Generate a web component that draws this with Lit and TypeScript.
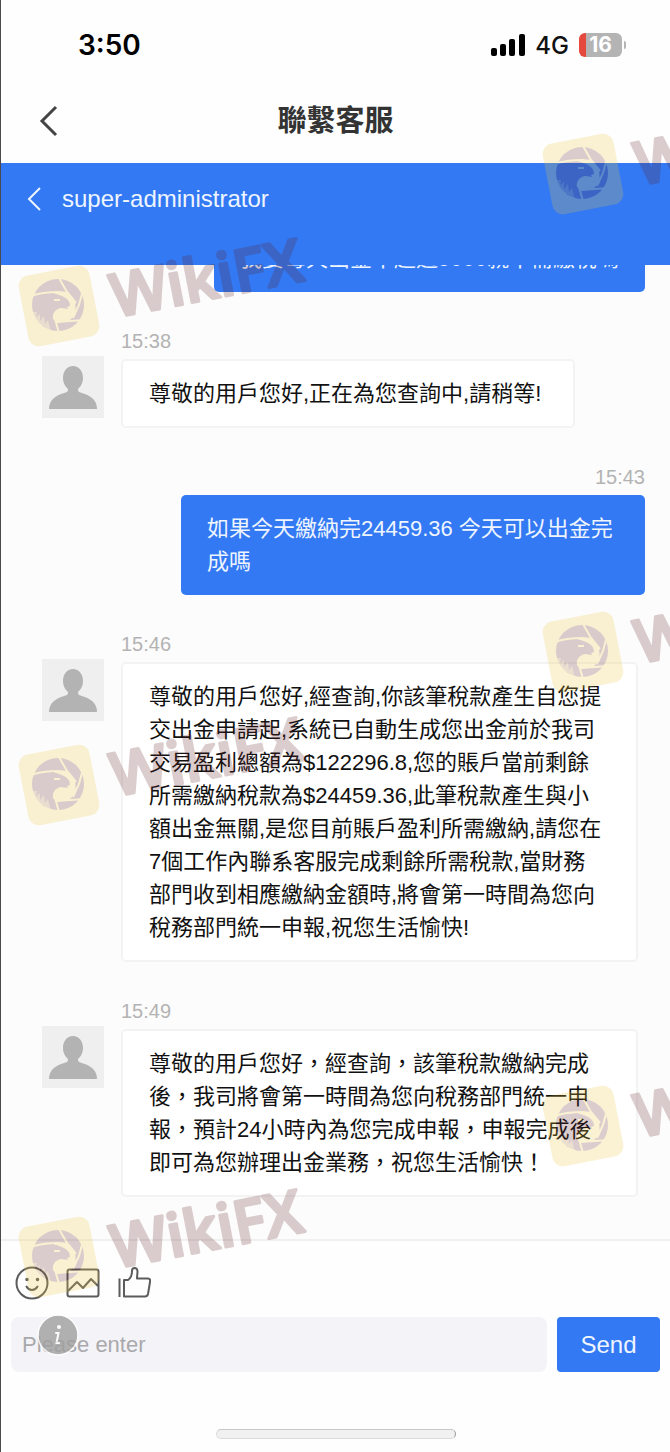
import { LitElement, html, css } from "lit";
import { customElement, property } from "lit/decorators.js";

interface Message {
  time: string;
  text: string;
  mine: boolean;
}

const MESSAGES: Message[] = [
  { time: "15:36", text: "我要每天出金不超過5000就不需繳稅嗎", mine: true },
  { time: "15:38", text: "尊敬的用戶您好,正在為您查詢中,請稍等!", mine: false },
  { time: "15:43", text: "如果今天繳納完24459.36 今天可以出金完成嗎", mine: true },
  {
    time: "15:46",
    text: "尊敬的用戶您好,經查詢,你該筆稅款產生自您提交出金申請起,系統已自動生成您出金前於我司交易盈利總額為$122296.8,您的賬戶當前剩餘所需繳納稅款為$24459.36,此筆稅款產生與小額出金無關,是您目前賬戶盈利所需繳納,請您在7個工作內聯系客服完成剩餘所需稅款,當財務部門收到相應繳納金額時,將會第一時間為您向稅務部門統一申報,祝您生活愉快!",
    mine: false,
  },
  {
    time: "15:49",
    text: "尊敬的用戶您好，經查詢，該筆稅款繳納完成後，我司將會第一時間為您向稅務部門統一申報，預計24小時內為您完成申報，申報完成後即可為您辦理出金業務，祝您生活愉快！",
    mine: false,
  },
];

// Anchor points of the repeated brand marks, in page pixels.
const MARKS = [
  { x: 583, y: 174 },
  { x: 59, y: 306 },
  { x: 583, y: 652 },
  { x: 59, y: 785 },
  { x: 583, y: 1126 },
  { x: 59, y: 1257 },
];

@customElement("brand-mark")
class BrandMark extends LitElement {
  static styles = css`
    :host {
      display: block;
    }
    .mark {
      display: block;
      width: 320px;
      height: 160px;
      overflow: visible;
      opacity: 0.22;
    }
    .tile {
      fill: #edc83c;
    }
    .ink {
      fill: #5f1e23;
    }
    .cut {
      fill: none;
      stroke: #edc83c;
      stroke-width: 2;
    }
    .gold {
      fill: #edc83c;
    }
    .word {
      font: 600 60px "Open Sans", sans-serif;
      fill: #5f1e23;
      stroke: #5f1e23;
      stroke-width: 3;
      stroke-linejoin: round;
    }
  `;
  render() {
    return html`<svg class="mark" viewBox="-40 -80 320 160" aria-hidden="true">
      <rect class="tile" x="-36" y="-36" width="72" height="72" rx="11" transform="rotate(-11)" />
      <circle class="ink" cx="-1" cy="-1" r="26" />
      <path
        class="gold"
        d="M-1 -15 L9 -14 L16 -5 L17 8 L10 15 L-2 17 L-6 13 C-7 8 -4 3 2 2 C5 2 7 3 9 3 L8 1 L11 0 C11 -4 9 -7 5 -9 C2 -10 0 -12 -5 -12Z"
      />
      <path
        class="cut"
        d="M-28 -10 C-20 -13 -12 -14 0 -14 M0 -28 L8 -14 L17 -3 M24 -16 L20 -1 L14 12 M26 14 L12 15 L-3 16 M-4 13 L0 27"
      />
      <path class="gold" d="M-28 6 L-22 6 L-23 11 L-19 8 L-19 15 L-15 10 L-14 18 L-11 14 L-8 26 L-14 25 L-15 20 L-20 20Z" opacity="0.5" />
      <path class="cut" d="M-5 -6 L1 -6" />
      <text class="word" x="53" y="22" transform="rotate(-11)">WikiFX</text>
    </svg>`;
  }
}

@customElement("chat-message")
class ChatMessage extends LitElement {
  @property({ attribute: false }) message!: Message;

  static styles = css`
    :host {
      display: block;
    }
    .row {
      display: flex;
      gap: 17px;
    }
    .row.mine {
      justify-content: flex-end;
    }
    .avatar {
      flex: none;
      width: 62px;
      height: 62px;
      margin-top: 25px;
      background: #efefef;
    }
    .body {
      display: flex;
      flex-direction: column;
      align-items: flex-start;
      gap: 8px;
      min-width: 0;
    }
    .mine .body {
      align-items: flex-end;
    }
    .time {
      font-size: 20px;
      line-height: 20px;
      color: #b3b3b3;
    }
    .bubble {
      box-sizing: border-box;
      max-width: 517px;
      margin: 0;
      padding: 16px 32px 16px 26px;
      border: 2px solid #f3f3f3;
      border-radius: 5px;
      background: #fff;
      color: #111;
      font-size: 22px;
      line-height: 33px;
    }
    .mine .bubble {
      max-width: 464px;
      padding: 17px 26px;
      border: 0;
      background: #3379f3;
      color: #eef5ff;
    }
  `;
  render() {
    const m = this.message;
    return html`<article class="row ${m.mine ? "mine" : ""}">
      ${m.mine
        ? ""
        : html`<svg class="avatar" viewBox="0 0 62 62" aria-hidden="true">
            <path
              fill="#b3b3b3"
              d="M31 10 C37 10 41 15 41 22 C41 28 38 31 36 33 C36 37 38 36 43 38 C51 41 55 46 55 53 H7 C7 46 11 41 19 38 C24 36 26 37 26 33 C24 31 21 28 21 22 C21 15 25 10 31 10Z"
            />
          </svg>`}
      <div class="body">
        <time class="time">${m.time}</time>
        <p class="bubble">${m.text}</p>
      </div>
    </article>`;
  }
}

@customElement("app-root")
class AppRoot extends LitElement {
  static styles = css`
    :host {
      display: block;
      font-family: "Liberation Sans", "Noto Sans CJK TC", sans-serif;
    }
    .page {
      position: relative;
      box-sizing: border-box;
      display: flex;
      flex-direction: column;
      height: 100vh;
      overflow: hidden;
      border-left: 1px solid #4a4a4e;
      background: #fefefe;
    }
    button {
      padding: 0;
      border: 0;
      background: none;
      font-family: inherit;
      cursor: pointer;
    }
    svg {
      display: block;
    }
    .status {
      flex: none;
      box-sizing: border-box;
      display: flex;
      align-items: center;
      justify-content: space-between;
      height: 79px;
      padding: 11px 44px 0 77px;
      font-family: Inter, sans-serif;
    }
    .clock {
      font-size: 28px;
      font-weight: 600;
      color: #000;
    }
    .signals {
      display: flex;
      align-items: center;
      gap: 10px;
    }
    .network {
      font-size: 24px;
      font-weight: 500;
      color: #111;
    }
    .battery {
      display: flex;
      align-items: center;
      gap: 2px;
    }
    .cell {
      box-sizing: border-box;
      width: 43px;
      height: 24px;
      border-radius: 6px;
      background: linear-gradient(90deg, #e5483d 7px, #b4b4b4 7px);
      color: #fff;
      font-size: 21px;
      line-height: 24px;
      font-weight: 700;
      text-align: center;
    }
    .tip {
      width: 2px;
      height: 8px;
      border-radius: 0 2px 2px 0;
      background: #b4b4b4;
    }
    .nav {
      flex: none;
      display: grid;
      grid-template-columns: 60px 1fr 60px;
      align-items: center;
      height: 84px;
    }
    .back {
      padding-left: 38px;
    }
    .title {
      margin: 0;
      text-align: center;
      font-size: 29px;
      line-height: 36px;
      font-weight: 700;
      color: #333;
    }
    .agent {
      flex: none;
      box-sizing: border-box;
      display: flex;
      align-items: center;
      gap: 21px;
      height: 102px;
      padding: 0 25px 30px;
      background: #3379f3;
      color: #eef5ff;
      font-size: 24px;
    }
    .chat {
      flex: 1;
      min-height: 0;
      display: flex;
      flex-direction: column;
      justify-content: flex-end;
      gap: 39px;
      padding: 0 25px 42px 41px;
      overflow: hidden;
      background: #fcfcfc;
    }
    .chat > * {
      flex: none;
    }
    .composer {
      flex: none;
      padding: 25px 10px 13px;
      border-top: 2px solid #f0f0f0;
    }
    .tools {
      display: flex;
      align-items: center;
      gap: 17px;
      height: 34px;
      padding-left: 4px;
    }
    .entry {
      position: relative;
      display: flex;
      gap: 10px;
      margin-top: 17px;
    }
    .field {
      flex: 1;
      min-width: 0;
      box-sizing: border-box;
      height: 55px;
      padding: 0 11px;
      border: 0;
      border-radius: 8px;
      background: #f3f3f8;
      font-family: inherit;
      font-size: 22px;
      color: #333;
    }
    .field::placeholder {
      color: #a9a9ab;
      opacity: 1;
    }
    .send {
      width: 103px;
      height: 55px;
      border-radius: 4px;
      background: #3379f3;
      color: #eef5ff;
      font-size: 24px;
    }
    .info {
      position: absolute;
      left: 26px;
      top: -3px;
      opacity: 0.8;
    }
    .home {
      box-sizing: border-box;
      width: 240px;
      height: 10px;
      margin: 57px auto 0;
      border: 1px solid #dcdcdc;
      border-top-color: #c8c8c8;
      border-right-color: #999;
      border-radius: 5px;
      background: #f1f1f1;
    }
    .marks {
      position: absolute;
      inset: 0;
      overflow: hidden;
      pointer-events: none;
    }
    .mark {
      position: absolute;
    }
  `;

  render() {
    return html`<main class="page">
      <div class="status">
        <span class="clock">3:50</span>
        <div class="signals">
          <svg width="34" height="22" viewBox="0 0 34 22" aria-hidden="true">
            <rect x="0" y="14" width="6" height="8" rx="2" />
            <rect x="9" y="10" width="6" height="12" rx="2" />
            <rect x="18" y="5" width="6" height="17" rx="2" />
            <rect x="28" y="0" width="6" height="22" rx="2" />
          </svg>
          <span class="network">4G</span>
          <span class="battery"><span class="cell">16</span><span class="tip"></span></span>
        </div>
      </div>

      <header class="nav">
        <button class="back" aria-label="返回">
          <svg width="19" height="32" viewBox="0 0 19 32" fill="none" stroke="#444" stroke-width="3">
            <path d="M17 2 L3 16 L17 30" />
          </svg>
        </button>
        <h1 class="title">聯繫客服</h1>
      </header>

      <div class="agent">
        <button aria-label="Back">
          <svg width="15" height="26" viewBox="0 0 15 26" fill="none" stroke="#eef5ff" stroke-width="2">
            <path d="M14 2 L3 13 L14 24" />
          </svg>
        </button>
        <span>super-administrator</span>
      </div>

      <section class="chat">
        ${MESSAGES.map((m) => html`<chat-message .message=${m}></chat-message>`)}
      </section>

      <footer class="composer">
        <div class="tools">
          <button aria-label="Emoji">
            <svg width="34" height="34" viewBox="0 0 34 34" fill="none" stroke="#5c5c5c" stroke-width="2" stroke-linecap="round">
              <circle cx="17" cy="17" r="15.5" />
              <circle cx="12" cy="13.5" r="1" fill="#5c5c5c" stroke-width="1.5" />
              <circle cx="22.5" cy="13.5" r="1" fill="#5c5c5c" stroke-width="1.5" />
              <path d="M11.5 20.5 C14 25 20 25 22.5 20.5" />
            </svg>
          </button>
          <button aria-label="Picture">
            <svg width="34" height="34" viewBox="0 0 34 34" fill="none" stroke="#5c5c5c" stroke-width="2" stroke-linejoin="round">
              <rect x="1.5" y="3.5" width="31" height="27" rx="2" />
              <path d="M2 25 L11 16 L17 22 L25 13 L32 20" />
            </svg>
          </button>
          <button aria-label="Like">
            <svg width="34" height="34" viewBox="0 0 34 34" fill="none" stroke="#5c5c5c" stroke-width="2" stroke-linejoin="round">
              <path d="M2.500 12.500 V31" />
              <path d="M7 14 H11 C14 12 15 9 15 5 C15 1 20 1 20.500 5 C20.500 8 20 10 20 12.500 H31 C33 12.500 33.500 14 33 16 L31 28 C30.500 30 30 30.500 28 30.500 H7 Z" />
            </svg>
          </button>
        </div>
        <div class="entry">
          <input class="field" type="text" placeholder="Please enter" aria-label="Message" />
          <button class="send">Send</button>
          <button class="info" aria-label="Info">
            <svg width="42" height="42" viewBox="0 0 42 42" fill="none">
              <circle cx="21" cy="21" r="20" fill="#a0a0a0" stroke="#fff" stroke-width="1.5" />
              <circle cx="22" cy="13" r="2" fill="#fff" />
              <path d="M19 19 H21.500 L19.500 29 H22" stroke="#fff" stroke-width="2" stroke-linecap="round" />
            </svg>
          </button>
        </div>
        <div class="home"></div>
      </footer>

      <div class="marks">
        ${MARKS.map(
          (p) => html`<brand-mark class="mark" style="left:${p.x - 41}px;top:${p.y - 80}px"></brand-mark>`,
        )}
      </div>
    </main>`;
  }
}
